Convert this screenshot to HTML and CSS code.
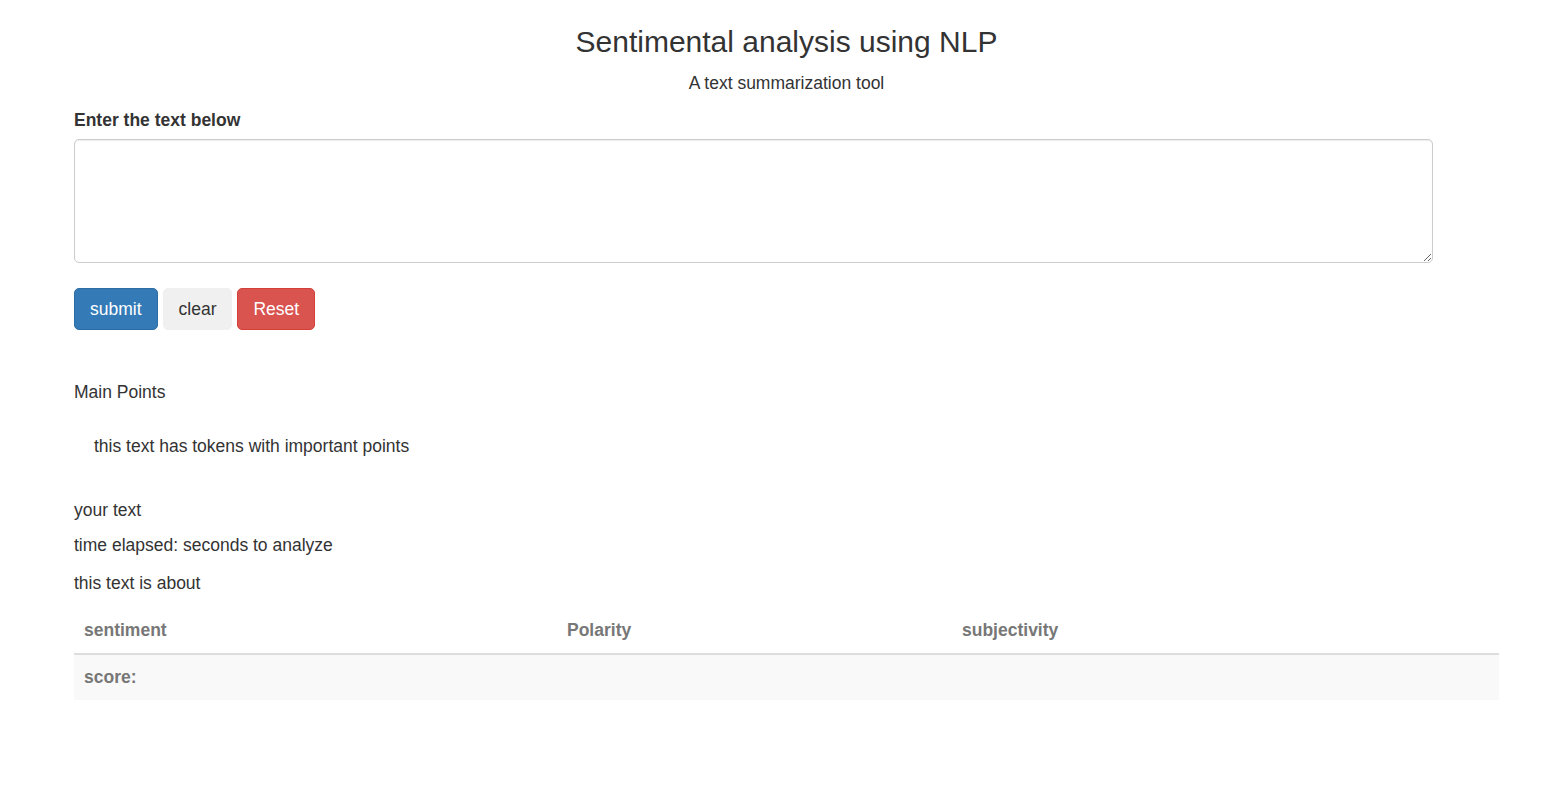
FILE: index.html
```html
<!DOCTYPE html>
<html lang="en">
<head>
<meta charset="utf-8">
<title>Sentimental analysis using NLP</title>
<link rel="stylesheet" href="styles.css">
</head>
<body>
<div class="page">
  <header class="head">
    <h3 class="title">Sentimental analysis using NLP</h3>
    <p class="subtitle">A text summarization tool</p>
  </header>
  <form class="form">
    <label class="label" for="rawtext">Enter the text below</label>
    <textarea id="rawtext" class="input"></textarea>
    <div class="actions">
      <button type="button" class="btn btn-primary">submit</button>
      <button type="button" class="btn btn-light">clear</button>
      <button type="button" class="btn btn-danger">Reset</button>
    </div>
  </form>
  <section class="results">
    <p class="heading">Main Points</p>
    <p class="points">this text has tokens with important points</p>
    <p class="line line-a">your text</p>
    <p class="line line-b">time elapsed: seconds to analyze</p>
    <p class="line line-c">this text is about</p>
    <table class="table">
      <thead>
        <tr>
          <th class="c1">sentiment</th>
          <th class="c2">Polarity</th>
          <th class="c3">subjectivity</th>
        </tr>
      </thead>
      <tbody>
        <tr class="striped">
          <th>score:</th>
          <td></td>
          <td></td>
        </tr>
      </tbody>
    </table>
  </section>
</div>
</body>
</html>
```

FILE: styles.css
```css
* { box-sizing: border-box; }
html, body { margin: 0; padding: 0; background: #fff; }
body {
  font-family: "Liberation Sans", Arial, Helvetica, sans-serif;
  font-size: 17.5px;
  line-height: 25px;
  color: #333;
}
.page {
  margin-left: 74px;
  width: 1425px;
}
.head { text-align: center; }
.title {
  margin: 25px 0 12.5px;
  font-size: 30px;
  line-height: 33px;
  font-weight: 500;
}
.subtitle {
  margin: 0 0 12px;
}
.form {
  display: flex;
  flex-direction: column;
  align-items: flex-start;
}
.label {
  font-weight: 700;
  margin-bottom: 6px;
}
.input {
  display: block;
  width: 1359px;
  height: 124px;
  border: 1px solid #ccc;
  border-radius: 5px;
  box-shadow: inset 0 1px 1px rgba(0,0,0,.075);
  padding: 8px 15px;
  font: inherit;
  color: #555;
  resize: both;
  margin: 0;
}
.actions {
  display: flex;
  gap: 5px;
  margin-top: 25px;
}
.btn {
  font-family: inherit;
  font-size: 17.5px;
  line-height: 25px;
  height: 42px;
  padding: 8px 15px 7px;
  border: 1px solid transparent;
  border-radius: 5px;
  cursor: pointer;
}
.btn-primary { background: #337ab7; border-color: #2e6da4; color: #fff; }
.btn-light { background: #f0f0f0; border-color: #f0f0f0; color: #333; }
.btn-danger { background: #d9534f; border-color: #d43f3a; color: #fff; }
.results { margin-top: 50px; }
.results p { margin: 0; }
.heading { margin-bottom: 29px !important; }
.points { padding-left: 20px; margin-bottom: 39px !important; }
.line-a { margin-bottom: 10px !important; }
.line-b { margin-bottom: 13px !important; }
.line-c { margin-bottom: 12px !important; }
.table {
  width: 100%;
  border-collapse: collapse;
  border-spacing: 0;
}
.table th, .table td {
  text-align: left;
  padding: 10px;
  line-height: 25px;
  font-size: 17.5px;
  font-weight: 700;
  color: #777;
  vertical-align: bottom;
}
.table thead th { border-bottom: 2px solid #ddd; }
.c1 { width: 483px; }
.c2 { width: 395px; }
.striped { background: #f9f9f9; }
.striped th, .striped td { vertical-align: top; }
```
